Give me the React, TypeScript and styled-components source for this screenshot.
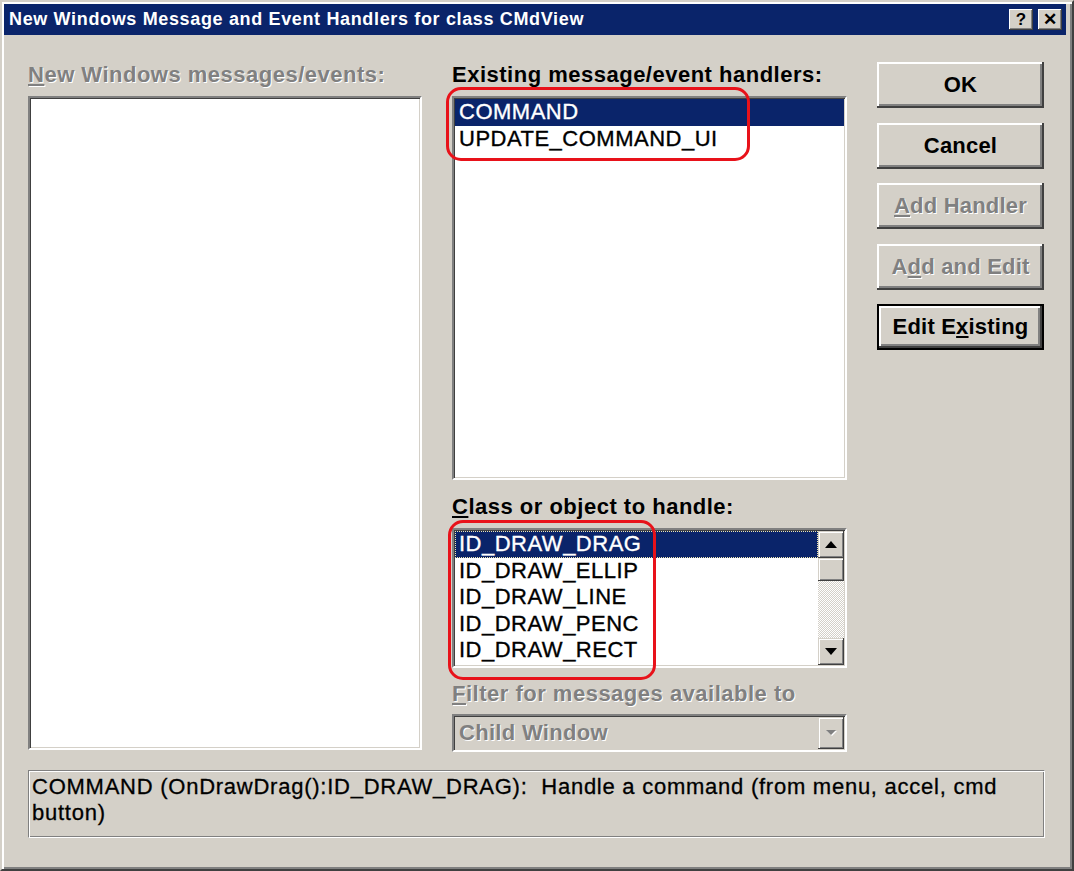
import React from 'react';
import styled, { createGlobalStyle, css } from 'styled-components';

const C = {
  face: '#d4d0c8',
  light: '#ffffff',
  shadow: '#808080',
  dark: '#404040',
  navy: '#0a246a',
  gray: '#808080',
  red: '#e8121a',
};

const GlobalStyle = createGlobalStyle`
  html, body { margin: 0; padding: 0; }
  body {
    background: ${C.face};
    font-family: "Liberation Sans", Arial, sans-serif;
  }
`;

const Window = styled.div`
  box-sizing: border-box;
  width: 1074px;
  height: 871px;
  background: ${C.face};
  border-style: solid;
  border-width: 2px;
  border-color: ${C.face} ${C.dark} ${C.dark} ${C.face};
  box-shadow: inset 2px 2px ${C.light}, inset -2px -2px ${C.shadow};
  padding: 2px 6px 2px 2px;
  display: flex;
  flex-direction: column;
`;

const TitleBar = styled.div`
  height: 31px;
  flex: none;
  background: ${C.navy};
  display: flex;
  align-items: center;
  justify-content: space-between;
  padding: 0 4px 0 5px;
`;

const TitleText = styled.div`
  color: #fff;
  font-weight: 700;
  font-size: 18px;
  letter-spacing: 0.65px;
  white-space: nowrap;
`;

const CaptionButtons = styled.div`
  display: flex;
  gap: 5px;
`;

const CaptionButton = styled.div`
  box-sizing: border-box;
  width: 24px;
  height: 21px;
  background: ${C.face};
  box-shadow: inset -1px -1px ${C.dark}, inset 1px 1px ${C.light},
    inset -2px -2px ${C.shadow};
  display: flex;
  align-items: center;
  justify-content: center;
  font-weight: 700;
  font-size: 17px;
  color: #000;
  line-height: 1;
  padding-bottom: 1px;
`;

const Body = styled.div`
  flex: 1;
  display: flex;
  flex-direction: column;
  padding: 25px 21px 0 24px;
`;

const TopGrid = styled.div`
  display: grid;
  grid-template-columns: 394px 395px 167px;
  column-gap: 30px;
`;

const Column = styled.div`
  display: flex;
  flex-direction: column;
`;

const Label = styled.div<{ $disabled?: boolean; $mt?: number }>`
  height: 30px;
  line-height: 30px;
  font-weight: 700;
  font-size: 22px;
  letter-spacing: 0.5px;
  white-space: nowrap;
  margin-top: ${(p) => p.$mt ?? 0}px;
  color: ${(p) => (p.$disabled ? C.gray : '#000')};
  text-shadow: ${(p) => (p.$disabled ? `1px 1px ${C.light}` : 'none')};
`;

const Acc = styled.span`
  text-decoration: underline;
  text-decoration-thickness: 2px;
  text-underline-offset: 2px;
`;

const sunken = css`
  box-sizing: border-box;
  border: 2px solid;
  border-color: ${C.shadow} ${C.light} ${C.light} ${C.shadow};
  padding: 1px;
  box-shadow: inset 1px 1px ${C.dark}, inset -1px -1px ${C.face};
`;

const ListBox = styled.div<{ $h: number }>`
  ${sunken};
  position: relative;
  height: ${(p) => p.$h}px;
  margin-top: 6px;
  background: #fff;
  display: flex;
`;

const Rows = styled.div`
  flex: 1;
  display: flex;
  flex-direction: column;
  overflow: hidden;
`;

const Row = styled.div<{ $selected?: boolean; $focus?: boolean }>`
  box-sizing: border-box;
  height: 26.6px;
  line-height: 26.6px;
  padding-left: 4px;
  font-size: 22px;
  letter-spacing: 0.5px;
  white-space: nowrap;
  -webkit-text-stroke: 0.35px currentColor;
  color: ${(p) => (p.$selected ? '#fff' : '#000')};
  background: ${(p) => (p.$selected ? C.navy : 'transparent')};
  outline: ${(p) => (p.$focus ? '1px dotted #efe6b0' : 'none')};
  outline-offset: -1px;
`;

const raised = css`
  background: ${C.face};
  box-shadow: inset -1px -1px ${C.dark}, inset 1px 1px ${C.face},
    inset 2px 2px ${C.light}, inset -2px -2px ${C.shadow};
`;

const ScrollBar = styled.div`
  width: 26px;
  flex: none;
  display: flex;
  flex-direction: column;
`;

const ScrollArrow = styled.div`
  ${raised};
  height: 27px;
  flex: none;
  display: flex;
  align-items: center;
  justify-content: center;
`;

const Track = styled.div`
  flex: 1;
  background: repeating-conic-gradient(${C.face} 0 25%, #ffffff 0 50%) 0 0 / 2px 2px;
`;

const Thumb = styled.div`
  ${raised};
  height: 23px;
`;

const Combo = styled.div`
  ${sunken};
  height: 38px;
  margin-top: 5px;
  background: ${C.face};
  display: flex;
`;

const ComboText = styled.div`
  flex: 1;
  padding-left: 4px;
  line-height: 32px;
  font-weight: 700;
  font-size: 22px;
  letter-spacing: 0.3px;
  color: ${C.gray};
  text-shadow: 1px 1px ${C.light};
`;

const DropButton = styled.div`
  ${raised};
  width: 26px;
  display: flex;
  align-items: center;
  justify-content: center;
`;

const ButtonStack = styled.div`
  display: flex;
  flex-direction: column;
  gap: 14.5px;
  margin-top: 2px;
`;

const Button = styled.div<{ $default?: boolean; $disabled?: boolean }>`
  box-sizing: border-box;
  height: 46px;
  display: flex;
  align-items: center;
  justify-content: center;
  background: ${C.face};
  font-weight: 700;
  font-size: 22px;
  letter-spacing: 0.2px;
  white-space: nowrap;
  color: ${(p) => (p.$disabled ? C.gray : '#000')};
  text-shadow: ${(p) => (p.$disabled ? `1px 1px ${C.light}` : 'none')};
  border: ${(p) => (p.$default ? '2px solid #000' : 'none')};
  box-shadow: inset -2px -2px ${C.dark}, inset 2px 2px ${C.light},
    inset -4px -4px ${C.shadow};
`;

const StatusBox = styled.div`
  box-sizing: border-box;
  margin-top: 18px;
  width: 1017px;
  height: 68px;
  border: 1px solid;
  border-color: ${C.shadow} ${C.light} ${C.light} ${C.shadow};
  box-shadow: inset 1px 1px ${C.light}, inset -1px -1px ${C.shadow};
  padding: 3px 4px 0 3px;
  font-size: 22px;
  letter-spacing: 0.75px;
  line-height: 26px;
  color: #000;
  -webkit-text-stroke: 0.3px currentColor;
  white-space: pre-wrap;
`;

const Annotation = styled.div<{ $l: number; $t: number; $w: number; $h: number }>`
  position: absolute;
  left: ${(p) => p.$l}px;
  top: ${(p) => p.$t}px;
  width: ${(p) => p.$w}px;
  height: ${(p) => p.$h}px;
  box-sizing: border-box;
  border: 3px solid ${C.red};
  border-radius: 15px;
  pointer-events: none;
`;

const Arrow = ({ up, color = '#000' }: { up?: boolean; color?: string }) => (
  <svg width="12" height="7" viewBox="0 0 12 7">
    {up ? (
      <polygon points="6,0 12,7 0,7" fill={color} />
    ) : (
      <polygon points="0,0 12,0 6,7" fill={color} />
    )}
  </svg>
);

const GrayArrow = () => (
  <svg width="11" height="7" viewBox="0 0 11 7">
    <polygon points="1,1 11,1 6,6" fill="#ffffff" />
    <polygon points="0,0 10,0 5,5" fill={C.gray} />
  </svg>
);

const classItems = ['ID_DRAW_DRAG', 'ID_DRAW_ELLIP', 'ID_DRAW_LINE', 'ID_DRAW_PENC', 'ID_DRAW_RECT'];

export default function App() {
  return (
    <>
      <GlobalStyle />
      <Window>
        <TitleBar>
          <TitleText>New Windows Message and Event Handlers for class CMdView</TitleText>
          <CaptionButtons>
            <CaptionButton>?</CaptionButton>
            <CaptionButton>✕</CaptionButton>
          </CaptionButtons>
        </TitleBar>
        <Body>
          <TopGrid>
            <Column>
              <Label $disabled>
                <Acc>N</Acc>ew Windows messages/events:
              </Label>
              <ListBox $h={654} />
            </Column>
            <Column>
              <Label>Existing message/event handlers:</Label>
              <ListBox $h={384}>
                <Rows>
                  <Row $selected>COMMAND</Row>
                  <Row>UPDATE_COMMAND_UI</Row>
                </Rows>
                <Annotation $l={-8} $t={-11} $w={304} $h={74} />
              </ListBox>
              <Label $mt={12}>
                <Acc>C</Acc>lass or object to handle:
              </Label>
              <ListBox $h={140}>
                <Rows>
                  {classItems.map((it, i) => (
                    <Row key={it} $selected={i === 0} $focus={i === 0}>
                      {it}
                    </Row>
                  ))}
                </Rows>
                <ScrollBar>
                  <ScrollArrow>
                    <Arrow up />
                  </ScrollArrow>
                  <Track>
                    <Thumb />
                  </Track>
                  <ScrollArrow>
                    <Arrow />
                  </ScrollArrow>
                </ScrollBar>
                <Annotation $l={-6} $t={-10} $w={208} $h={160} />
              </ListBox>
              <Label $disabled $mt={11}>
                <Acc>F</Acc>ilter for messages available to
              </Label>
              <Combo>
                <ComboText>Child Window</ComboText>
                <DropButton>
                  <GrayArrow />
                </DropButton>
              </Combo>
            </Column>
            <ButtonStack>
              <Button>OK</Button>
              <Button>Cancel</Button>
              <Button $disabled>
                <Acc>A</Acc>dd Handler
              </Button>
              <Button $disabled>
                A<Acc>d</Acc>d and Edit
              </Button>
              <Button $default>
                Edit E<Acc>x</Acc>isting
              </Button>
            </ButtonStack>
          </TopGrid>
          <StatusBox>
            {'COMMAND (OnDrawDrag():ID_DRAW_DRAG):  Handle a command (from menu, accel, cmd button)'}
          </StatusBox>
        </Body>
      </Window>
    </>
  );
}
